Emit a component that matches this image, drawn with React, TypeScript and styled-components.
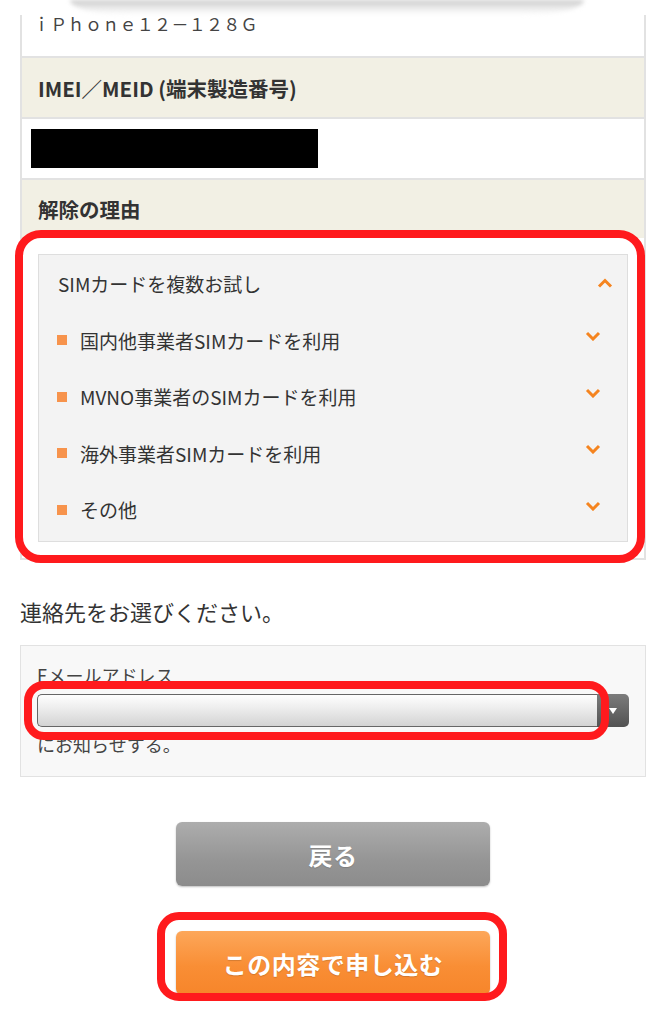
import React from "react";
import styled, { createGlobalStyle } from "styled-components";

const Global = createGlobalStyle`
  html, body { margin: 0; padding: 0; background: #fff; }
  body {
    font-family: "Noto Sans CJK JP", "Noto Sans", sans-serif;
    color: #333;
    overflow: hidden;
  }
  * { box-sizing: border-box; }
`;

const Page = styled.div`
  width: 666px;
  height: 1024px;
  padding: 0 20px;
  display: flex;
  flex-direction: column;
`;

const TopShade = styled.div`
  height: 15px;
  margin: 0 62px 0 50px;
  border-radius: 0 0 60px 60px / 0 0 15px 15px;
  background: linear-gradient(#c9c9c9, #e6e6e6 45%, #f7f7f7 80%, #fff);
  filter: blur(2px);
`;

const Card = styled.div`
  border: 2px solid #e2e2e2;
  border-top: none;
  display: flex;
  flex-direction: column;
`;

const Row = styled.div<{ $tone: "white" | "beige"; $h: number; $last?: boolean }>`
  height: ${(p) => p.$h}px;
  background: ${(p) => (p.$tone === "beige" ? "#f2f0e4" : "#fff")};
  border-bottom: ${(p) => (p.$last ? "none" : "2px solid #e2e2e2")};
  display: flex;
  align-items: center;
`;

const ModelText = styled.div`
  align-self: flex-start;
  padding: 0 0 0 11px;
  font-size: 17px;
  line-height: 18px;
  color: #444;
  letter-spacing: 0.3px;
`;

const Label = styled.div`
  padding-left: 16px;
  font-size: 20.5px;
  font-weight: 700;
  color: #333;
`;

const Redacted = styled.div`
  margin-left: 9px;
  width: 287px;
  height: 39px;
  background: #000;
`;

const ReasonBody = styled.div`
  position: relative;
  padding: 16px;
  background: #fff;
`;

const Highlight = styled.div<{ $t: number; $l: number; $r: number; $b: number; $rad: number }>`
  position: absolute;
  top: ${(p) => p.$t}px;
  left: ${(p) => p.$l}px;
  right: ${(p) => p.$r}px;
  bottom: ${(p) => p.$b}px;
  border: 8px solid #ff1a1d;
  border-radius: ${(p) => p.$rad}px;
  pointer-events: none;
`;

const Accordion = styled.div`
  background: #f3f3f3;
  border: 1.5px solid #dedede;
  padding-bottom: 3px;
`;

const AccHeader = styled.div`
  height: 57px;
  display: flex;
  align-items: center;
  justify-content: space-between;
  padding: 0 14px 0 19px;
  font-size: 19px;
  color: #333;
`;

const AccItem = styled.div`
  height: 56.5px;
  display: flex;
  align-items: center;
  padding: 0 26px 0 18px;
  font-size: 19px;
  color: #333;
`;

const Square = styled.span`
  width: 10px;
  height: 10px;
  background: #f7934c;
  margin-right: 13px;
  flex-shrink: 0;
`;

const ItemText = styled.span`
  flex: 1;
`;

const Chevron = styled.svg<{ $dy: number }>`
  width: 16px;
  height: 10px;
  transform: translateY(${(p) => p.$dy}px);
`;

const Prompt = styled.div`
  margin: 36px 0 19px;
  font-size: 22px;
  line-height: 30px;
  color: #333;
`;

const ContactBox = styled.div`
  background: #f8f8f8;
  border: 1.5px solid #e2e2e2;
  padding: 17px 16px 20px;
  display: flex;
  flex-direction: column;
`;

const SmallText = styled.div`
  font-size: 18px;
  line-height: 24px;
  color: #444;
`;

const SelectWrap = styled.div`
  position: relative;
  margin: 7px 0 5px;
  height: 33px;
  display: flex;
`;

const SelectMain = styled.div`
  flex: 1;
  border: 1.5px solid #666;
  border-right: none;
  border-radius: 5px 0 0 5px;
  background: linear-gradient(#fefefe, #ececec 45%, #d3d3d3);
`;

const SelectButton = styled.div`
  width: 32px;
  border-radius: 0 5px 5px 0;
  background: linear-gradient(#7c7c7c, #525252);
  display: flex;
  align-items: center;
  justify-content: center;
`;

const Buttons = styled.div`
  margin-top: 45px;
  display: flex;
  flex-direction: column;
  align-items: center;
  gap: 45px;
`;

const BtnWrap = styled.div`
  position: relative;
`;

const Btn = styled.div<{ $kind: "gray" | "orange" }>`
  width: 314px;
  height: 64px;
  border-radius: 6px;
  display: flex;
  align-items: center;
  justify-content: center;
  color: #fff;
  font-weight: 700;
  font-size: 24px;
  letter-spacing: 0.5px;
  text-shadow: 0 1px 1px rgba(0, 0, 0, 0.15);
  background: ${(p) =>
    p.$kind === "gray"
      ? "linear-gradient(#adadad, #959595 60%, #8c8c8c)"
      : "linear-gradient(#fda75a, #f98e35 55%, #f6852a)"};
  box-shadow: 0 1px 2px rgba(0, 0, 0, 0.25);
`;

const reasons = [
  "国内他事業者SIMカードを利用",
  "MVNO事業者のSIMカードを利用",
  "海外事業者SIMカードを利用",
  "その他",
];

const ChevronIcon = ({ up, dy }: { up?: boolean; dy: number }) => (
  <Chevron viewBox="0 0 16 10" $dy={dy}>
    <polyline
      points={up ? "2,8.5 8,2.5 14,8.5" : "2,2 8,8 14,2"}
      fill="none"
      stroke="#f5841f"
      strokeWidth="3"
      strokeLinejoin="miter"
    />
  </Chevron>
);

export default function App() {
  return (
    <>
      <Global />
      <Page>
        <TopShade />
        <Card>
          <Row $tone="white" $h={43}>
            <ModelText>ｉＰｈｏｎｅ１２－１２８Ｇ</ModelText>
          </Row>
          <Row $tone="beige" $h={61}>
            <Label>IMEI／MEID (端末製造番号)</Label>
          </Row>
          <Row $tone="white" $h={61}>
            <Redacted />
          </Row>
          <Row $tone="beige" $h={58} $last>
            <Label>解除の理由</Label>
          </Row>
          <ReasonBody>
            <Accordion>
              <AccHeader>
                <span>SIMカードを複数お試し</span>
                <ChevronIcon up dy={-1} />
              </AccHeader>
              {reasons.map((r) => (
                <AccItem key={r}>
                  <Square />
                  <ItemText>{r}</ItemText>
                  <ChevronIcon dy={-4} />
                </AccItem>
              ))}
            </Accordion>
            <Highlight $t={-8} $l={-7} $r={-1} $b={-5} $rad={26} />
          </ReasonBody>
        </Card>

        <Prompt>連絡先をお選びください。</Prompt>

        <ContactBox>
          <SmallText>Eメールアドレス</SmallText>
          <SelectWrap>
            <SelectMain />
            <SelectButton>
              <svg width="10" height="8" viewBox="0 0 10 8">
                <polygon points="1,1 9,1 5,7" fill="#fff" />
              </svg>
            </SelectButton>
            <Highlight $t={-13} $l={-13} $r={20} $b={-13} $rad={20} />
          </SelectWrap>
          <SmallText>にお知らせする。</SmallText>
        </ContactBox>

        <Buttons>
          <Btn $kind="gray">戻る</Btn>
          <BtnWrap>
            <Btn $kind="orange">この内容で申し込む</Btn>
            <Highlight $t={-19} $l={-19} $r={-17} $b={-6} $rad={22} />
          </BtnWrap>
        </Buttons>
      </Page>
    </>
  );
}
